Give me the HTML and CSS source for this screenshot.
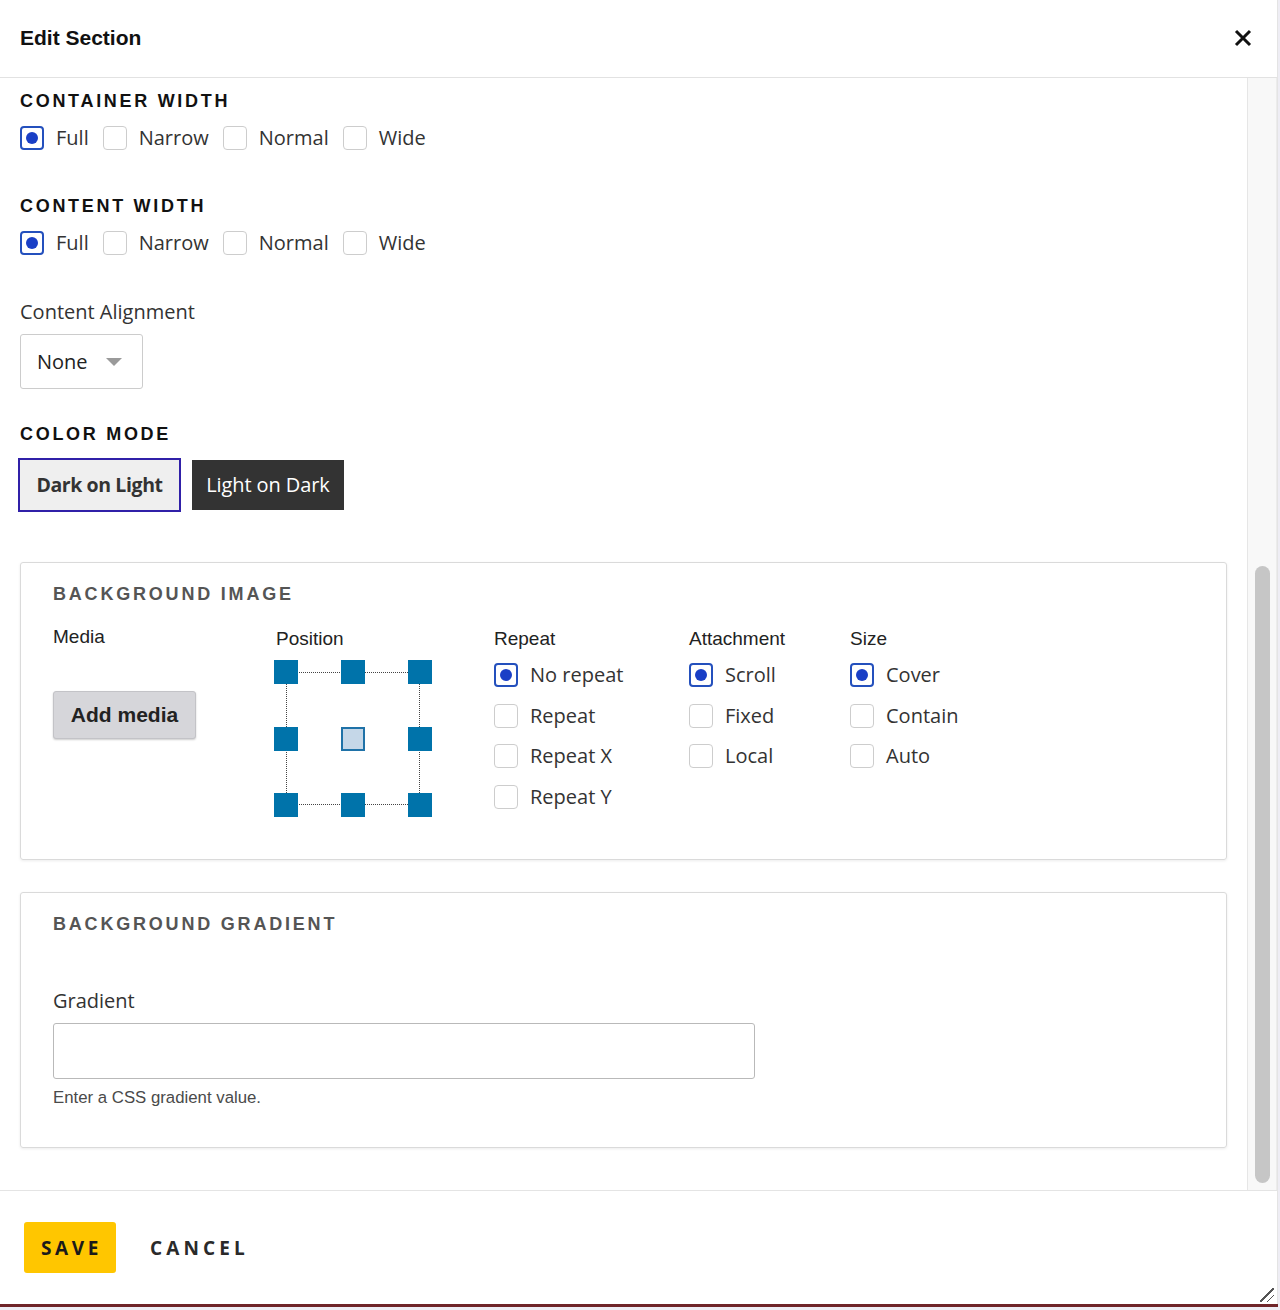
FILE: index.html
```html
<!DOCTYPE html>
<html>
<head>
<meta charset="utf-8">
<title>Edit Section</title>
<link rel="stylesheet" href="styles.css">
</head>
<body>
<div class="page">
  <div class="dialog">
    <header class="dlg-head">
      <h1 class="dlg-title">Edit Section</h1>
      <button class="close" aria-label="Close">
        <svg width="18" height="18" viewBox="0 0 18 18"><path d="M2 2 L16 16 M16 2 L2 16" stroke="#111" stroke-width="3" stroke-linecap="butt"/></svg>
      </button>
    </header>

    <div class="dlg-body">
      <div class="scroll-content">
        <h2 class="group-title">CONTAINER WIDTH</h2>
        <div class="radio-row">
          <label class="opt"><span class="box checked"></span>Full</label>
          <label class="opt"><span class="box"></span>Narrow</label>
          <label class="opt"><span class="box"></span>Normal</label>
          <label class="opt"><span class="box"></span>Wide</label>
        </div>

        <h2 class="group-title mt">CONTENT WIDTH</h2>
        <div class="radio-row">
          <label class="opt"><span class="box checked"></span>Full</label>
          <label class="opt"><span class="box"></span>Narrow</label>
          <label class="opt"><span class="box"></span>Normal</label>
          <label class="opt"><span class="box"></span>Wide</label>
        </div>

        <div class="field-label mt">Content Alignment</div>
        <div class="select"><span>None</span><span class="caret"></span></div>

        <h2 class="group-title mode-title">COLOR MODE</h2>
        <div class="mode-row">
          <button class="mode light">Dark on Light</button>
          <button class="mode dark">Light on Dark</button>
        </div>

        <section class="fieldset bg-image">
          <div class="legend">BACKGROUND IMAGE</div>
          <div class="bg-cols">
            <div class="col col-media">
              <div class="col-label media-label">Media</div>
              <button class="add-media">Add media</button>
            </div>
            <div class="col col-pos">
              <div class="col-label pos-label">Position</div>
              <div class="pos-grid">
                <span class="pt"></span><span class="pt"></span><span class="pt"></span>
                <span class="pt"></span><span class="pt sel"></span><span class="pt"></span>
                <span class="pt"></span><span class="pt"></span><span class="pt"></span>
              </div>
            </div>
            <div class="col col-repeat">
              <div class="col-label">Repeat</div>
              <div class="radio-col">
                <label class="opt"><span class="box checked"></span>No repeat</label>
                <label class="opt"><span class="box"></span>Repeat</label>
                <label class="opt"><span class="box"></span>Repeat X</label>
                <label class="opt"><span class="box"></span>Repeat Y</label>
              </div>
            </div>
            <div class="col col-attach">
              <div class="col-label">Attachment</div>
              <div class="radio-col">
                <label class="opt"><span class="box checked"></span>Scroll</label>
                <label class="opt"><span class="box"></span>Fixed</label>
                <label class="opt"><span class="box"></span>Local</label>
              </div>
            </div>
            <div class="col col-size">
              <div class="col-label">Size</div>
              <div class="radio-col">
                <label class="opt"><span class="box checked"></span>Cover</label>
                <label class="opt"><span class="box"></span>Contain</label>
                <label class="opt"><span class="box"></span>Auto</label>
              </div>
            </div>
          </div>
        </section>

        <section class="fieldset bg-gradient">
          <div class="legend">BACKGROUND GRADIENT</div>
          <div class="field-label grad-label">Gradient</div>
          <div class="text-input"></div>
          <div class="help">Enter a CSS gradient value.</div>
        </section>
      </div>
      <div class="scrollbar"><div class="thumb"></div></div>
    </div>

    <footer class="dlg-foot">
      <button class="save">SAVE</button>
      <button class="cancel">CANCEL</button>
      <span class="resize"></span>
    </footer>
  </div>
  <div class="under"></div>
</div>
</body>
</html>
```

FILE: styles.css
```css
* { box-sizing: border-box; }
html, body { margin: 0; padding: 0; }
body {
  background: #eeedf4;
  font-family: "Open Sans", "Liberation Sans", sans-serif;
  color: #333;
}
button { font: inherit; cursor: pointer; }

.page { width: 1280px; height: 1310px; }

.dialog {
  width: 1278px;
  height: 1304px;
  background: #fff;
  display: flex;
  flex-direction: column;
  border-right: 1px solid #e4e4e4;
}

/* header */
.dlg-head {
  height: 78px;
  flex: none;
  border-bottom: 1px solid #e2e2e2;
  display: flex;
  align-items: center;
  justify-content: space-between;
  padding: 0 25px 2px 20px;
}
.dlg-title {
  margin: 0;
  font-family: "Liberation Sans", Arial, sans-serif;
  font-weight: 700;
  font-size: 21px;
  color: #111;
}
.close {
  border: 0;
  background: none;
  padding: 0;
  width: 18px;
  height: 18px;
  display: flex;
}

/* body */
.dlg-body {
  height: 1112px;
  flex: none;
  display: flex;
  overflow: hidden;
}
.scroll-content {
  flex: 1;
  padding: 11px 20px 0 20px;
}
.scrollbar {
  width: 30px;
  flex: none;
  background: #f8f8f8;
  border-left: 1px solid #e6e6e6;
  border-right: 1px solid #ececec;
  padding-top: 488px;
  padding-left: 7px;
}
.thumb {
  width: 15px;
  height: 617px;
  border-radius: 8px;
  background: #c6c6c6;
}

.group-title {
  margin: 0;
  font-family: "Liberation Sans", Arial, sans-serif;
  font-weight: 700;
  font-size: 18px;
  line-height: 24px;
  letter-spacing: 2.7px;
  color: #111;
}
.group-title.mt { margin-top: 43px; }
.mode-title { margin-top: 33px; }

.radio-row {
  display: flex;
  gap: 14px;
  margin-top: 12px;
  height: 26px;
  align-items: center;
}
.opt {
  display: flex;
  align-items: center;
  gap: 12px;
  font-size: 20px;
  line-height: 26px;
  color: #333;
  white-space: nowrap;
}
.box {
  width: 24px;
  height: 24px;
  border: 1px solid #cdcdcd;
  border-radius: 4px;
  background: #fff;
  flex: none;
  display: flex;
  align-items: center;
  justify-content: center;
}
.box.checked {
  border: 2px solid #2450bd;
}
.box.checked::after {
  content: "";
  width: 12px;
  height: 12px;
  border-radius: 50%;
  background: #1a3fc6;
}

.field-label {
  font-size: 20px;
  line-height: 26px;
  color: #333;
}
.field-label.mt { margin-top: 43px; }

.select {
  margin-top: 9px;
  width: 123px;
  height: 55px;
  border: 1px solid #cccccc;
  border-radius: 3px;
  display: flex;
  align-items: center;
  justify-content: space-between;
  padding: 0 20px 0 16px;
  font-size: 20px;
  color: #222;
}
.caret {
  width: 0;
  height: 0;
  border-left: 8px solid transparent;
  border-right: 8px solid transparent;
  border-top: 8px solid #9a9a9a;
  margin-top: 1px;
}

.mode-row {
  display: flex;
  gap: 13px;
  margin-top: 14px;
}
.mode {
  height: 50px;
  border: 0;
  padding: 0;
  font-size: 20px;
  line-height: 50px;
  white-space: nowrap;
}
.mode.light {
  width: 159px;
  background: #efefef;
  color: #333;
  font-weight: 700;
  font-size: 19.5px;
  outline: 2px solid #3020a8;
  letter-spacing: -0.4px;
}
.mode.dark {
  width: 152px;
  background: #333;
  color: #fff;
  font-weight: 400;
  letter-spacing: -0.1px;
}

/* fieldsets */
.fieldset {
  border: 1px solid #dadada;
  border-radius: 3px;
  box-shadow: 0 1px 3px rgba(0, 0, 0, 0.08);
  padding: 19px 32px 0 32px;
}
.bg-image {
  margin-top: 52px;
  height: 298px;
}
.bg-gradient {
  margin-top: 32px;
  height: 256px;
}
.legend {
  font-family: "Liberation Sans", Arial, sans-serif;
  font-weight: 700;
  font-size: 18px;
  line-height: 24px;
  letter-spacing: 2.8px;
  color: #555;
}

.bg-cols {
  display: flex;
  margin-top: 21px;
}
.col-label {
  font-family: "Liberation Sans", Arial, sans-serif;
  font-size: 19px;
  line-height: 24px;
  color: #222;
}
.col-media { width: 221px; }
.media-label { margin-top: -2px; margin-bottom: 2px; }
.col-pos { width: 220px; }
.col-repeat { width: 195px; }
.col-attach { width: 161px; }
.col-size { width: 160px; }
.pos-label { padding-left: 2px; }

.add-media {
  margin-top: 40px;
  width: 143px;
  height: 48px;
  background: #d6d6da;
  border: 1px solid #c3c3c7;
  border-radius: 3px;
  box-shadow: 0 1px 2px rgba(0, 0, 0, 0.2);
  font-family: "Liberation Sans", Arial, sans-serif;
  font-weight: 700;
  font-size: 21px;
  color: #222;
  padding: 0;
}

.pos-grid {
  position: relative;
  margin-top: 9px;
  width: 158px;
  height: 157px;
  display: grid;
  grid-template-columns: repeat(3, 24px);
  grid-template-rows: repeat(3, 24px);
  justify-content: space-between;
  align-content: space-between;
}
.pos-grid::before {
  content: "";
  position: absolute;
  left: 12px;
  top: 12px;
  right: 12px;
  bottom: 12px;
  border: 1px dotted #444;
}
.pt {
  position: relative;
  width: 24px;
  height: 24px;
  background: #0073aa;
}
.pt.sel {
  background: #c5d7e8;
  border: 2px solid #1f72a8;
}

.radio-col {
  margin-top: 12px;
  display: flex;
  flex-direction: column;
  gap: 16.5px;
}
.radio-col .opt { height: 24px; }

.grad-label { margin-top: 52px; }
.text-input {
  margin-top: 9px;
  width: 702px;
  height: 56px;
  border: 1px solid #b9b9b9;
  border-radius: 3px;
}
.help {
  margin-top: 9px;
  font-family: "Liberation Sans", Arial, sans-serif;
  font-size: 16.8px;
  line-height: 20px;
  color: #4a4a4a;
}

/* footer */
.dlg-foot {
  position: relative;
  flex: 1;
  border-top: 1px solid #e4e4e4;
  display: flex;
  align-items: flex-start;
  padding: 31px 0 0 24px;
  gap: 34px;
}
.save {
  width: 92px;
  height: 51px;
  background: #ffc600;
  border: 0;
  border-radius: 3px;
  font-weight: 700;
  font-size: 19px;
  letter-spacing: 3.6px;
  color: #1a1a1a;
  padding: 0 0 0 3px;
}
.cancel {
  height: 51px;
  background: none;
  border: 0;
  padding: 0;
  font-weight: 700;
  font-size: 19px;
  letter-spacing: 4.1px;
  color: #2a2a2a;
}
.resize {
  position: absolute;
  right: 3px;
  bottom: 2px;
  width: 14px;
  height: 14px;
  background:
    linear-gradient(135deg, transparent 46%, #555 46%, #555 54%, transparent 54%) no-repeat 0 0 / 14px 14px,
    linear-gradient(135deg, transparent 46%, #555 46%, #555 54%, transparent 54%) no-repeat 7px 7px / 7px 7px;
}

.under {
  height: 3px;
  width: 1278px;
  background: #6f2428;
}
```
